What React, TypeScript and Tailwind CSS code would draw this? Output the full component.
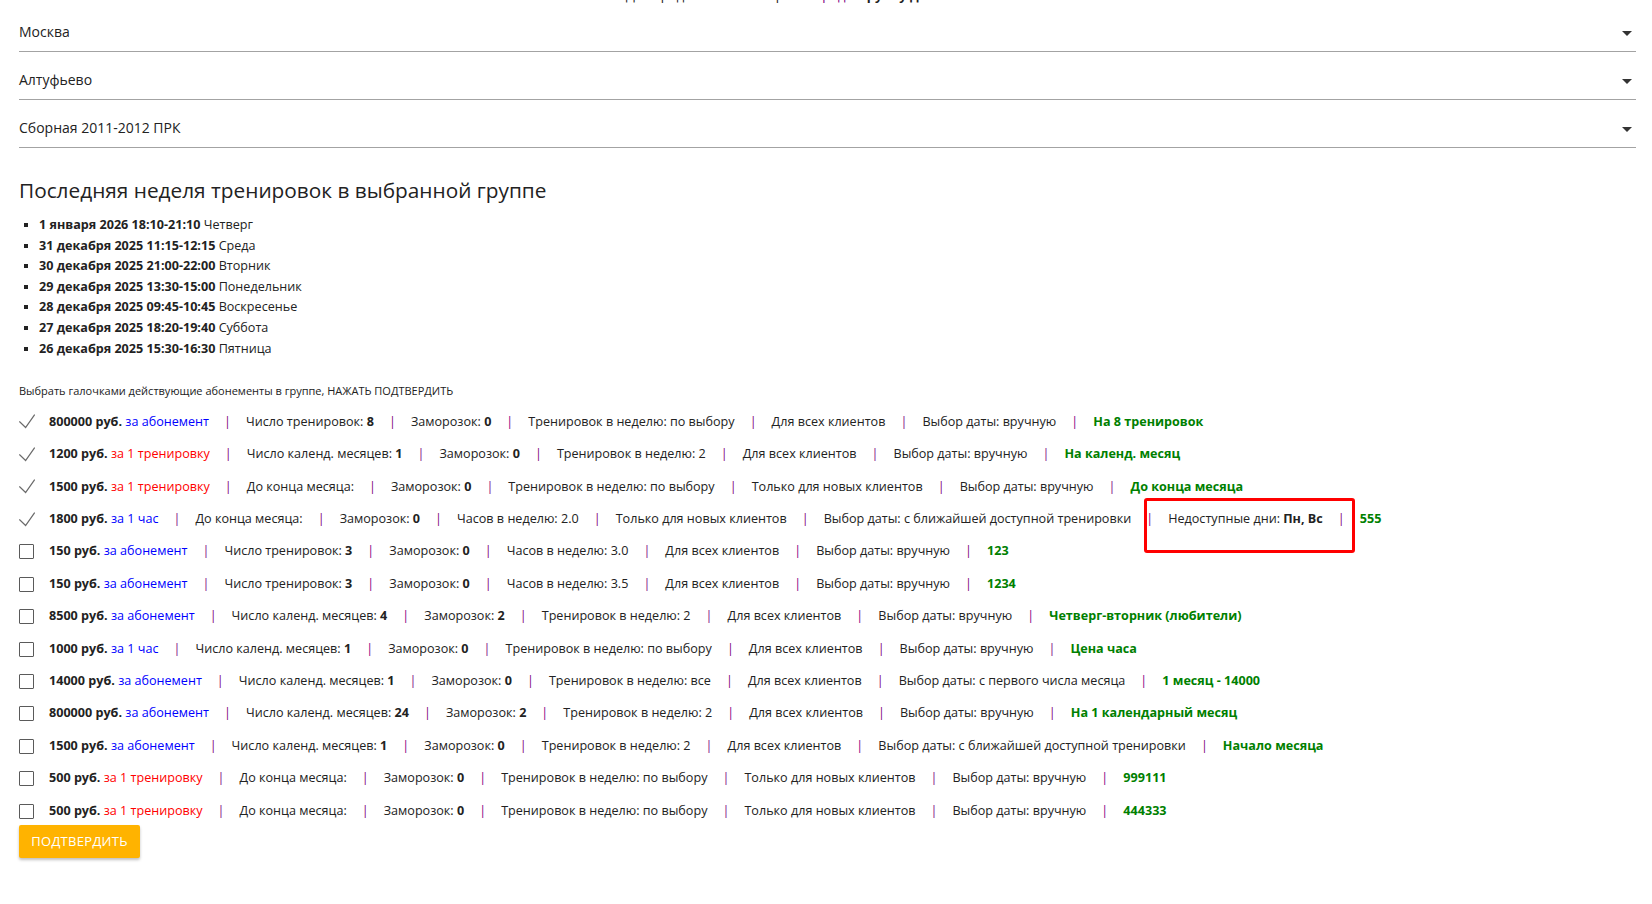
import React from 'react';

type Row = {
  checked: boolean;
  price: string;
  per: string;
  perColor: 'blue' | 'red';
  parts: [string, string?][];
  unavailable?: string;
  note: string;
};

const sessions = [
  ['1 января 2026 18:10-21:10', 'Четверг'],
  ['31 декабря 2025 11:15-12:15', 'Среда'],
  ['30 декабря 2025 21:00-22:00', 'Вторник'],
  ['29 декабря 2025 13:30-15:00', 'Понедельник'],
  ['28 декабря 2025 09:45-10:45', 'Воскресенье'],
  ['27 декабря 2025 18:20-19:40', 'Суббота'],
  ['26 декабря 2025 15:30-16:30', 'Пятница'],
];

const rows: Row[] = [
  {
    checked: true, price: '800000', per: 'за абонемент', perColor: 'blue',
    parts: [['Число тренировок:', '8'], ['Заморозок:', '0'], ['Тренировок в неделю: по выбору'], ['Для всех клиентов'], ['Выбор даты: вручную']],
    note: 'На 8 тренировок',
  },
  {
    checked: true, price: '1200', per: 'за 1 тренировку', perColor: 'red',
    parts: [['Число календ. месяцев:', '1'], ['Заморозок:', '0'], ['Тренировок в неделю: 2'], ['Для всех клиентов'], ['Выбор даты: вручную']],
    note: 'На календ. месяц',
  },
  {
    checked: true, price: '1500', per: 'за 1 тренировку', perColor: 'red',
    parts: [['До конца месяца:', ''], ['Заморозок:', '0'], ['Тренировок в неделю: по выбору'], ['Только для новых клиентов'], ['Выбор даты: вручную']],
    note: 'До конца месяца',
  },
  {
    checked: true, price: '1800', per: 'за 1 час', perColor: 'blue',
    parts: [['До конца месяца:', ''], ['Заморозок:', '0'], ['Часов в неделю: 2.0'], ['Только для новых клиентов'], ['Выбор даты: с ближайшей доступной тренировки']],
    unavailable: 'Пн, Вс',
    note: '555',
  },
  {
    checked: false, price: '150', per: 'за абонемент', perColor: 'blue',
    parts: [['Число тренировок:', '3'], ['Заморозок:', '0'], ['Часов в неделю: 3.0'], ['Для всех клиентов'], ['Выбор даты: вручную']],
    note: '123',
  },
  {
    checked: false, price: '150', per: 'за абонемент', perColor: 'blue',
    parts: [['Число тренировок:', '3'], ['Заморозок:', '0'], ['Часов в неделю: 3.5'], ['Для всех клиентов'], ['Выбор даты: вручную']],
    note: '1234',
  },
  {
    checked: false, price: '8500', per: 'за абонемент', perColor: 'blue',
    parts: [['Число календ. месяцев:', '4'], ['Заморозок:', '2'], ['Тренировок в неделю: 2'], ['Для всех клиентов'], ['Выбор даты: вручную']],
    note: 'Четверг-вторник (любители)',
  },
  {
    checked: false, price: '1000', per: 'за 1 час', perColor: 'blue',
    parts: [['Число календ. месяцев:', '1'], ['Заморозок:', '0'], ['Тренировок в неделю: по выбору'], ['Для всех клиентов'], ['Выбор даты: вручную']],
    note: 'Цена часа',
  },
  {
    checked: false, price: '14000', per: 'за абонемент', perColor: 'blue',
    parts: [['Число календ. месяцев:', '1'], ['Заморозок:', '0'], ['Тренировок в неделю: все'], ['Для всех клиентов'], ['Выбор даты: с первого числа месяца']],
    note: '1 месяц - 14000',
  },
  {
    checked: false, price: '800000', per: 'за абонемент', perColor: 'blue',
    parts: [['Число календ. месяцев:', '24'], ['Заморозок:', '2'], ['Тренировок в неделю: 2'], ['Для всех клиентов'], ['Выбор даты: вручную']],
    note: 'На 1 календарный месяц',
  },
  {
    checked: false, price: '1500', per: 'за абонемент', perColor: 'blue',
    parts: [['Число календ. месяцев:', '1'], ['Заморозок:', '0'], ['Тренировок в неделю: 2'], ['Для всех клиентов'], ['Выбор даты: с ближайшей доступной тренировки']],
    note: 'Начало месяца',
  },
  {
    checked: false, price: '500', per: 'за 1 тренировку', perColor: 'red',
    parts: [['До конца месяца:', ''], ['Заморозок:', '0'], ['Тренировок в неделю: по выбору'], ['Только для новых клиентов'], ['Выбор даты: вручную']],
    note: '999111',
  },
  {
    checked: false, price: '500', per: 'за 1 тренировку', perColor: 'red',
    parts: [['До конца месяца:', ''], ['Заморозок:', '0'], ['Тренировок в неделю: по выбору'], ['Только для новых клиентов'], ['Выбор даты: вручную']],
    note: '444333',
  },
];

const Sep = () => <span className="inline-block w-[37px] shrink-0 text-center text-[#800080]">|</span>;

const Select = ({ value }: { value: string }) => (
  <div className="flex h-[48px] items-end justify-between border-b border-[#a3a3a3] pb-[10px] text-[14px] leading-[18px] text-[#222]">
    <span>{value}</span>
    <svg width="10" height="5" viewBox="0 0 10 5" className="mr-[4px] mb-[5px]">
      <path d="M0 0h10L5 5z" fill="#333" />
    </svg>
  </div>
);

export default function App() {
  return (
    <div className="min-h-screen overflow-hidden bg-white pl-[19px] pr-[16px] pt-[4px] font-['Open_Sans',sans-serif] text-[#222]">
      <div className="-mt-[14px] h-[14px] text-center text-[13px] leading-[10px]">
        Для продолжения выберите <span className="text-[#800080]">город</span> и <b>группу для абонементов</b>
      </div>
      <Select value="Москва" />
      <Select value="Алтуфьево" />
      <Select value="Сборная 2011-2012 ПРК" />

      <h2 className="mt-[27px] text-[20.8px] leading-[30px]">Последняя неделя тренировок в выбранной группе</h2>
      <ul className="mt-[10px] list-[square] pl-[20px] text-[12.6px] leading-[20.6px]">
        {sessions.map(([d, w]) => (
          <li key={d}>
            <b>{d}</b> {w}
          </li>
        ))}
      </ul>

      <p className="mt-[24px] text-[11px] leading-[16px]">Выбрать галочками действующие абонементы в группе, НАЖАТЬ ПОДТВЕРДИТЬ</p>

      <div className="mt-[7px]">
        {rows.map((r, i) => (
          <div key={i} className="flex h-[32.4px] items-center whitespace-nowrap text-[12.6px]">
            <span className="flex w-[30px] shrink-0 items-center">
              {r.checked ? (
                <svg width="16" height="16" viewBox="0 0 16 16">
                  <path d="M0.3 7.5L6.6 13.5L15.7 0.6" fill="none" stroke="#6b6b6b" strokeWidth="1.3" />
                </svg>
              ) : (
                <span className="block h-[15px] w-[15px] rounded-[1px] border-[1.5px] border-[#5a5a5a]" />
              )}
            </span>
            <span>
              <b>{r.price} руб.</b>{' '}
              <span className={r.perColor === 'blue' ? 'text-[#0000ff]' : 'text-[#ff0000]'}>{r.per}</span>
            </span>
            {r.parts.map(([label, val], j) => (
              <React.Fragment key={j}>
                <Sep />
                <span>
                  {label}
                  {val !== undefined && (
                    <>
                      {' '}
                      <b>{val}</b>
                    </>
                  )}
                </span>
              </React.Fragment>
            ))}
            {r.unavailable && (
              <span className="relative flex items-center self-stretch">
                <Sep />
                <span>
                  Недоступные дни: <b>{r.unavailable}</b>
                </span>
                <Sep />
                <span className="pointer-events-none absolute left-[13px] right-[5px] top-[-5px] h-[55px] rounded-[3px] border-[3px] border-[#ff0000]" />
              </span>
            )}
            {!r.unavailable && <Sep />}
            <b className="text-[#008000]">{r.note}</b>
          </div>
        ))}
      </div>

      <button className="-mt-[2px] h-[33px] w-[121px] rounded-[2px] bg-[#ffb300] text-[13px] tracking-[0.3px] text-white shadow-[0_2px_3px_rgba(0,0,0,0.25)]">
        ПОДТВЕРДИТЬ
      </button>
    </div>
  );
}
